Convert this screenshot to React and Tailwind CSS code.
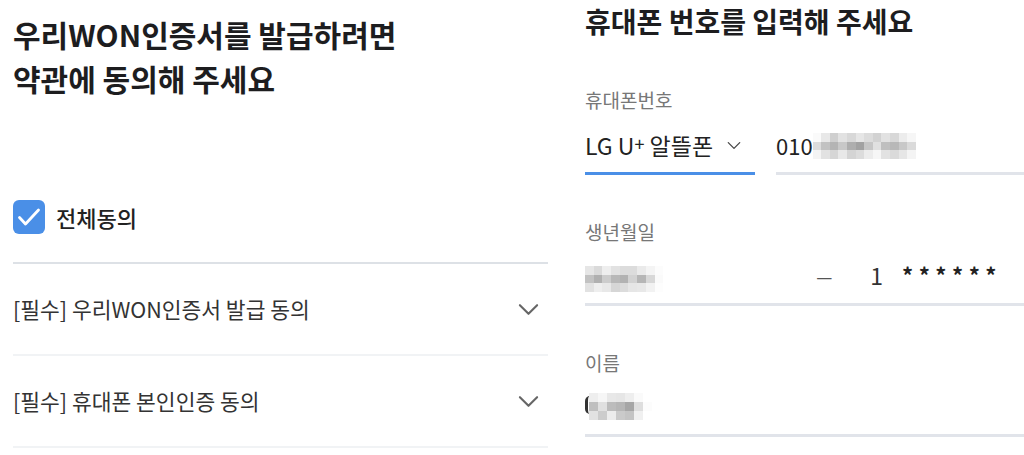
import React from 'react';

const FONT = { fontFamily: '"Noto Sans CJK KR", "Noto Sans", sans-serif' };

// pixelated blocks standing in for masked personal data
const Mosaic = ({ rows, cell = 9 }) => (
  <div className="flex flex-col">
    {rows.map((row, i) => (
      <div key={i} className="flex">
        {row.map((c, j) => (
          <div key={j} style={{ width: cell, height: cell, background: c }} />
        ))}
      </div>
    ))}
  </div>
);

const Chevron = ({ className, width = 2.2 }) => (
  <svg viewBox="0 0 22 13" className={className} fill="none" stroke="currentColor" strokeWidth={width} strokeLinecap="round" strokeLinejoin="round">
    <path d="M2 2l9 9 9-9" />
  </svg>
);

const AgreeRow = ({ text }) => (
  <div className="flex items-center justify-between h-[92px] border-b-2 border-[#f1f3f5] pr-[9px]">
    <span className="text-[21.5px] text-[#333] leading-none">{text}</span>
    <Chevron className="w-[21px] h-[13px] text-[#666]" />
  </div>
);

const Label = ({ children, className = '' }) => (
  <div className={`text-[19px] text-[#777] leading-[24px] ${className}`}>{children}</div>
);

export default function App() {
  return (
    <div className="w-[1024px] h-[455px] bg-white flex overflow-hidden" style={FONT}>
      {/* left: terms */}
      <div className="w-[548px] pl-[13px] shrink-0">
        <h1 className="mt-[12px] text-[30px] font-bold leading-[44px] text-[#1d1d1f]">
          우리WON인증서를 발급하려면<br />약관에 동의해 주세요
        </h1>
        <div className="mt-[100px] flex items-center gap-[11px] h-[34px]">
          <div className="w-[32px] h-[34px] rounded-[6px] bg-[#4a8fe7] flex items-center justify-center">
            <svg viewBox="0 0 24 24" className="w-[24px] h-[24px]" fill="none" stroke="white" strokeWidth="2.8" strokeLinecap="round" strokeLinejoin="round">
              <path d="M2.5 12.5l6 6.5 13-14" />
            </svg>
          </div>
          <span className="text-[22px] font-medium text-[#222] leading-none">전체동의</span>
        </div>
        <div className="mt-[28px] border-b-2 border-[#dde1e6]" />
        <AgreeRow text="[필수] 우리WON인증서 발급 동의" />
        <AgreeRow text="[필수] 휴대폰 본인인증 동의" />
      </div>

      {/* right: phone form */}
      <div className="flex-1 pl-[37px]">
        <h2 className="text-[28px] font-bold leading-[42px] text-[#1d1d1f]">
          휴대폰 번호를 입력해 주세요
        </h2>

        <Label className="mt-[46px]">휴대폰번호</Label>
        <div className="flex">
          <div className="w-[170px] h-[63px] border-b-[3px] border-[#4a8fe7] flex items-start">
            <span className="mt-[18px] text-[23px] text-[#222] leading-[30px] whitespace-nowrap">
              LG U<sup className="text-[18px] relative -top-[4px]">+</sup> 알뜰폰
            </span>
            <Chevron className="ml-[14px] mt-[29px] w-[14px] h-[9px] text-[#444]" width={2} />
          </div>
          <div className="flex-1 ml-[21px] h-[63px] border-b-[3px] border-[#e1e4ea] flex items-start">
            <span className="mt-[18px] text-[22px] text-[#222] leading-[30px]">010</span>
            <div className="mt-[21px]">
              <Mosaic
                cell={8.6}
                rows={[
                  ['#fafafa', '#e8e8e8', '#cfcfcf', '#e2e2e2', '#d8d8d8', '#e6e6e6', '#dcdcdc', '#d2d2d2', '#e2e2e2', '#d8d8d8', '#ececec', '#f6f6f6'],
                  ['#dcdcdc', '#c2c2c2', '#b4b4b4', '#c8c8c8', '#aeaeae', '#a2a2a2', '#c6c6c6', '#e0e0e0', '#bfbfbf', '#b8b8b8', '#c8c8c8', '#dadada'],
                  ['#f4f4f4', '#e2e2e2', '#d6d6d6', '#e8e8e8', '#d4d4d4', '#dcdcdc', '#ececec', '#f6f6f6', '#e2e2e2', '#dadada', '#e6e6e6', '#f4f4f4'],
                ]}
              />
            </div>
          </div>
        </div>

        <Label className="mt-[45px]">생년월일</Label>
        <div className="h-[62px] border-b-[3px] border-[#e1e4ea] flex items-start">
          <div className="mt-[22px]">
            <Mosaic
              cell={8.7}
              rows={[
                ['#e6e6e6', '#dadada', '#eeeeee', '#e2e2e2', '#dcdcdc', '#dcdcdc', '#eaeaea', '#f4f4f4', '#fcfcfc'],
                ['#c2c2c2', '#b0b0b0', '#cccccc', '#b8b8b8', '#b2b2b2', '#d2d2d2', '#b6b6b6', '#d8d8d8', '#fafafa'],
                ['#e2e2e2', '#eeeeee', '#e8e8e8', '#d6d6d6', '#dcdcdc', '#e6e6e6', '#e8e8e8', '#f2f2f2', '#fdfdfd'],
              ]}
            />
          </div>
          <span className="ml-[153px] mt-[23px] text-[18px] text-[#555] leading-[18px]">—</span>
          <span className="ml-[38px] mt-[16px] text-[23px] text-[#333] leading-[30px]">1</span>
          <span className="ml-[19px] mt-[15px] text-[22px] font-bold text-[#222] leading-[30px] tracking-[5.5px]">******</span>
        </div>

        <Label className="mt-[45px]">이름</Label>
        <div className="h-[62px] border-b-[3px] border-[#e1e4ea] flex items-start">
          {/* sliver of the first, partly masked glyph */}
          <div className="mt-[21px] w-[5px] h-[18px] border-l-[3px] border-[#333] rounded-l-full" />
          <div className="mt-[18px] -ml-[1px]">
            <Mosaic
              cell={9}
              rows={[
                ['#eeeeee', '#f6f6f6', '#e8e8e8', '#e6e6e6', '#eeeeee', '#fafafa', '#fff'],
                ['#bfbfbf', '#e0e0e0', '#bcbcbc', '#b6b6b6', '#a6a6a6', '#dedede', '#fcfcfc'],
                ['#e2e2e2', '#cccccc', '#ececec', '#cacaca', '#c4c4c4', '#f0f0f0', '#fff'],
              ]}
            />
          </div>
        </div>
      </div>
    </div>
  );
}
